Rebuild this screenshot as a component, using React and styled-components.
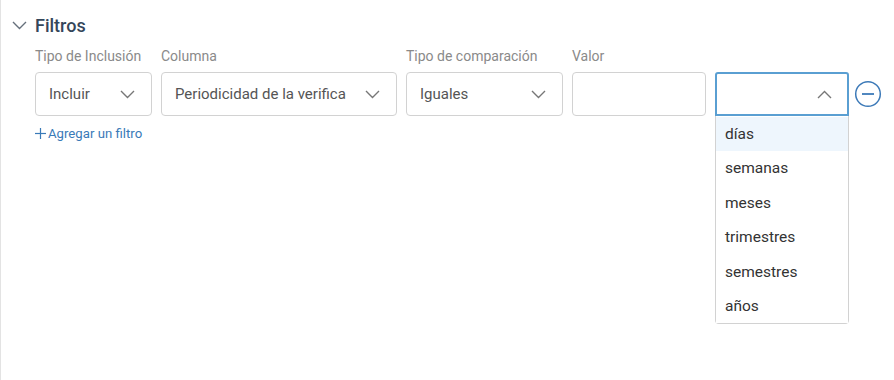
import React from "react";
import styled, { createGlobalStyle } from "styled-components";

const GlobalStyle = createGlobalStyle`
  html, body {
    margin: 0;
    padding: 0;
    background: #fff;
    font-family: Roboto, "Liberation Sans", sans-serif;
  }
`;

const Panel = styled.div`
  height: 380px;
  box-sizing: border-box;
  border-left: 1px solid #e3e3e3;
  padding: 14px 0 0 11px;
`;

const Header = styled.div`
  display: flex;
  align-items: center;
  gap: 8px;
  height: 22px;
  h2 {
    margin: 0;
    font-size: 18px;
    font-weight: 500;
    color: #34465a;
  }
`;

const Body = styled.div`
  padding-left: 23px;
  padding-top: 12px;
`;

const FieldsRow = styled.div`
  display: flex;
  align-items: flex-end;
  gap: 9px;
`;

const Field = styled.div`
  display: flex;
  flex-direction: column;
  width: ${(p) => p.w}px;
  position: relative;
`;

const Label = styled.label`
  font-size: 14px;
  color: #8a8a8a;
  line-height: 17px;
  height: 17px;
  margin-bottom: 7px;
  white-space: nowrap;
`;

const Box = styled.div`
  box-sizing: border-box;
  height: 44px;
  border: ${(p) => (p.active ? "2px solid #5a9fd2" : "1px solid #d2d2d2")};
  border-radius: ${(p) => (p.active ? "3px 3px 0 0" : "4px")};
  display: flex;
  align-items: center;
  padding: ${(p) => (p.active ? "0 15px 0 12px" : "0 16px 0 13px")};
  font-size: 15px;
  color: #555;
  background: #fff;
  span {
    flex: 1;
    overflow: hidden;
    white-space: nowrap;
  }
  svg {
    flex: none;
    margin-left: 19px;
  }
`;

const Menu = styled.ul`
  position: absolute;
  top: 100%;
  left: 0;
  right: 0;
  margin: 0;
  padding: 1px 0 0;
  list-style: none;
  background: #fff;
  border: 1px solid #d2d2d2;
  border-top: none;
  border-radius: 0 0 4px 4px;
  z-index: 2;
`;

const Option = styled.li`
  height: 34.4px;
  line-height: 34px;
  padding-left: 9px;
  font-size: 15.5px;
  color: #333;
  background: ${(p) => (p.selected ? "#eef6fd" : "#fff")};
`;

const RemoveButton = styled.button`
  border: 0;
  background: none;
  padding: 0;
  margin-left: -4px;
  height: 44px;
  display: flex;
  align-items: center;
  cursor: pointer;
`;

const AddLink = styled.a`
  display: inline-flex;
  align-items: center;
  gap: 2px;
  margin-top: 10px;
  font-size: 13.2px;
  color: #3a7ab8;
  text-decoration: none;
  cursor: pointer;
`;

const Chevron = ({ up, color = "#777", w = 15 }) => (
  <svg width={w} height="9" viewBox="0 0 15 9" fill="none">
    <polyline
      points={up ? "1,8 7.5,1.5 14,8" : "1,1 7.5,7.5 14,1"}
      stroke={color}
      strokeWidth="1.4"
    />
  </svg>
);

const options = ["días", "semanas", "meses", "trimestres", "semestres", "años"];

export default function App() {
  return (
    <>
      <GlobalStyle />
      <Panel>
        <Header>
          <Chevron color="#66707c" />
          <h2>Filtros</h2>
        </Header>
        <Body>
          <FieldsRow>
            <Field w={117}>
              <Label>Tipo de Inclusión</Label>
              <Box>
                <span>Incluir</span>
                <Chevron />
              </Box>
            </Field>
            <Field w={236}>
              <Label>Columna</Label>
              <Box>
                <span>Periodicidad de la verificación</span>
                <Chevron />
              </Box>
            </Field>
            <Field w={157}>
              <Label>Tipo de comparación</Label>
              <Box>
                <span>Iguales</span>
                <Chevron />
              </Box>
            </Field>
            <Field w={134}>
              <Label>Valor</Label>
              <Box />
            </Field>
            <Field w={134}>
              <Box active>
                <span />
                <Chevron up />
              </Box>
              <Menu>
                {options.map((o, i) => (
                  <Option key={o} selected={i === 0}>
                    {o}
                  </Option>
                ))}
              </Menu>
            </Field>
            <RemoveButton aria-label="Quitar filtro">
              <svg width="28" height="28" viewBox="0 0 28 28" fill="none">
                <circle cx="14" cy="14" r="12.3" stroke="#3d7ab8" strokeWidth="1.5" />
                <line x1="8" y1="14" x2="20" y2="14" stroke="#3d7ab8" strokeWidth="1.8" />
              </svg>
            </RemoveButton>
          </FieldsRow>
          <AddLink>
            <svg width="11" height="11" viewBox="0 0 11 11">
              <line x1="5.5" y1="0" x2="5.5" y2="11" stroke="#3a7ab8" strokeWidth="1.2" />
              <line x1="0" y1="5.5" x2="11" y2="5.5" stroke="#3a7ab8" strokeWidth="1.2" />
            </svg>
            Agregar un filtro
          </AddLink>
        </Body>
      </Panel>
    </>
  );
}
